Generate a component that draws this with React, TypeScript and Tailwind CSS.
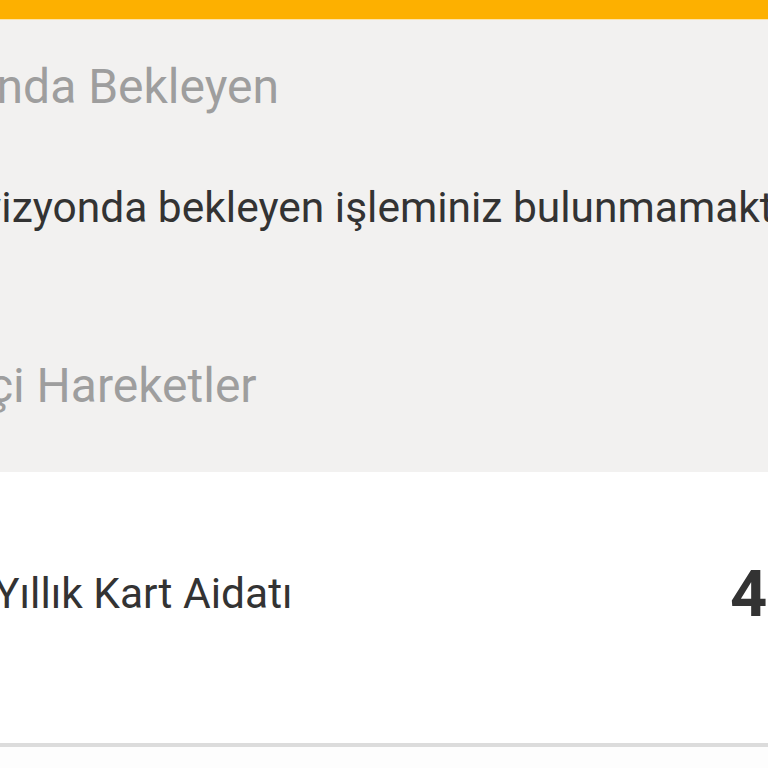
import React from 'react';

const font = { fontFamily: 'Roboto, "Noto Sans", sans-serif' };

export default function App() {
  return (
    <div className="w-[768px] h-[768px] overflow-hidden bg-[#fdfdfd]" style={font}>
      {/* top bar */}
      <div className="h-[20px] bg-[#fdb000] border-b border-[#fde3a8]" />

      {/* pending section */}
      <div className="bg-[#f2f1f0] h-[452px] overflow-hidden">
        <div className="whitespace-nowrap">
          <h2 className="ml-[-185px] pt-[39px] text-[48px] leading-[56px] font-normal text-[#9e9e9e]">
            Provizyonda Bekleyen
          </h2>
          <p className="ml-[-84px] mt-[67px] text-[42.5px] leading-[52px] text-[#333333]">
            Provizyonda bekleyen işleminiz bulunmamaktadır.
          </p>
          <h2 className="ml-[-190px] mt-[124px] text-[48px] leading-[56px] font-normal text-[#9e9e9e]">
            Dönem İçi Hareketler
          </h2>
        </div>
      </div>

      {/* transactions */}
      <div className="bg-white h-[271px] pt-[84px] flex items-start overflow-hidden whitespace-nowrap">
        <div className="ml-[-6px] w-[736px] shrink-0 text-[42.5px] leading-[76px] text-[#333333]">
          Yıllık Kart Aidatı
        </div>
        <div className="shrink-0 text-[65px] leading-[76px] font-bold text-[#333333]">4,99 TL</div>
      </div>
      <div className="h-[4px] bg-[#dcdcdc]" />
    </div>
  );
}
